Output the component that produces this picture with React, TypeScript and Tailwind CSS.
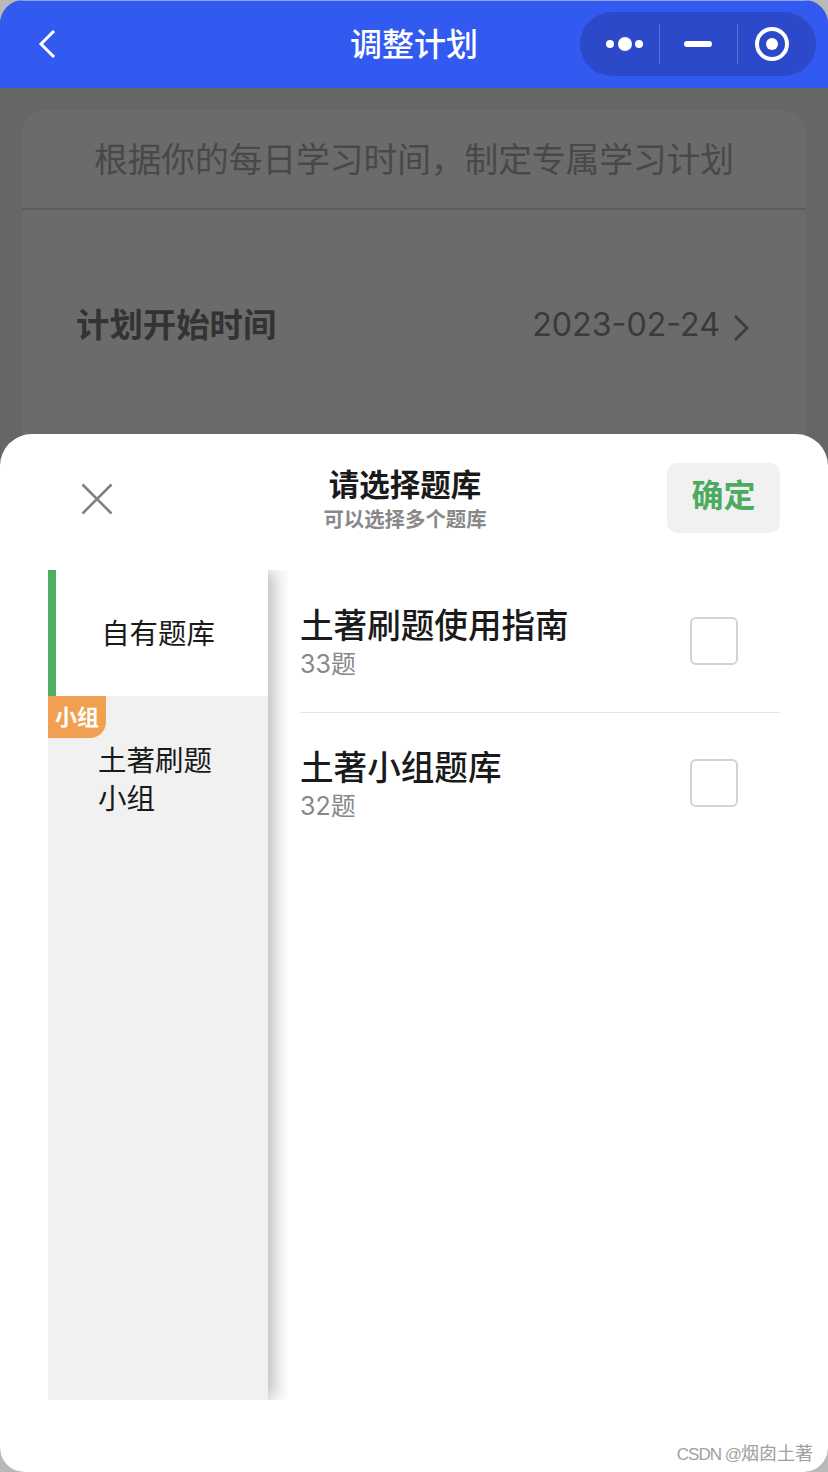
const font = { fontFamily: '"Inter", "Noto Sans CJK SC", sans-serif' };

const banks = [
  { name: "土著刷题使用指南", count: "33题" },
  { name: "土著小组题库", count: "32题" },
];

const CapsuleMenu = () => (
  <div className="mt-[-1px] flex h-[64px] w-[236px] items-center rounded-full bg-[#2b49c8]">
    <div className="flex w-[79px] items-center justify-end gap-[3.5px] pr-[16px]">
      <span className="h-[8px] w-[8px] rounded-full bg-white" />
      <span className="h-[14px] w-[14px] rounded-full bg-white" />
      <span className="h-[8px] w-[8px] rounded-full bg-white" />
    </div>
    <div className="h-[40px] w-[1px] bg-[#5a74d8]" />
    <div className="flex w-[77px] justify-center">
      <span className="mr-[2px] h-[6px] w-[28px] rounded-full bg-white" />
    </div>
    <div className="h-[40px] w-[1px] bg-[#5a74d8]" />
    <div className="flex flex-1 justify-center pr-[11px]">
      <span className="flex h-[34px] w-[34px] items-center justify-center rounded-full border-[4px] border-white">
        <span className="h-[12px] w-[12px] rounded-full bg-white" />
      </span>
    </div>
  </div>
);

export default function App() {
  return (
    <div className="h-[1472px] w-[828px] bg-[#b9b9b9]" style={font}>
      <div className="relative h-full w-full overflow-hidden rounded-[24px] bg-[#666666]">
        {/* nav bar */}
        <div className="relative flex h-[88px] items-center justify-between border-t border-[#8fa5f5] bg-[#335af0] pl-[37px] pr-[12px]">
          <svg width="20" height="30" viewBox="0 0 20 30" fill="none" className="mt-[-1px]">
            <path d="M17 2 L4 15 L17 28" stroke="white" strokeWidth="3" />
          </svg>
          <div className="absolute inset-x-0 text-center text-[32px] font-medium leading-[44px] text-white">调整计划</div>
          <div className="relative">
            <CapsuleMenu />
          </div>
        </div>

        {/* page under the mask */}
        <div className="px-[22px] pt-[22px]">
          <div className="h-[400px] rounded-t-[24px] bg-[#6b6b6b]">
            <div className="flex h-[100px] items-center justify-center border-b-[2px] border-[#5c5c5c] pt-[3px] text-[33.7px] text-[#484848]">
              根据你的每日学习时间，制定专属学习计划
            </div>
            <div className="flex items-center justify-between pl-[54px] pr-[57px] pt-[91px]">
              <span className="text-[33.4px] font-bold leading-[48px] text-[#333333]">计划开始时间</span>
              <span className="flex items-center gap-[13px] text-[32.2px] leading-[48px] text-[#3a3a3a]">
                2023-02-24
                <svg width="16" height="28" viewBox="0 0 16 28" fill="none" className="mt-[5px]">
                  <path d="M2 2 L14 14 L2 26" stroke="#3a3a3a" strokeWidth="2.6" />
                </svg>
              </span>
            </div>
          </div>
        </div>

        {/* bottom sheet */}
        <div className="absolute inset-x-0 bottom-0 top-[434px] rounded-t-[32px] bg-white">
          <div className="relative flex h-[136px] items-start justify-between pl-[81px] pr-[48px] pt-[29px]">
            <svg width="32" height="32" viewBox="0 0 32 32" fill="none" className="mt-[20px]">
              <path d="M1.5 1.5 L30.5 30.5 M30.5 1.5 L1.5 30.5" stroke="#808080" strokeWidth="2.6" />
            </svg>
            <div className="absolute left-0 right-[18px] top-[31px] text-center">
              <div className="text-[30.5px] font-bold leading-[40px] text-[#1a1a1a]">请选择题库</div>
              <div className="text-[20.4px] font-bold leading-[30px] text-[#888888]">可以选择多个题库</div>
            </div>
            <div className="relative flex h-[70px] w-[113px] items-center justify-center rounded-[10px] bg-[#f1f1f1] pb-[4px] text-[32px] font-bold text-[#4cab60]">
              确定
            </div>
          </div>

          <div className="flex h-[830px]">
            {/* left tabs, shadow clipped to the row height */}
            <div className="ml-[48px] h-full w-[240px] overflow-hidden">
              <div className="flex h-full w-[220px] flex-col bg-[#f1f1f1] shadow-[5px_0_18px_rgba(0,0,0,0.3)]">
                <div className="flex h-[126px] items-center justify-center border-l-[8px] border-[#4fae62] bg-white pr-[8px] pt-[3px] text-[28.4px] text-[#1a1a1a]">
                  自有题库
                </div>
                <div className="relative pl-[50px] pt-[46px] text-[28.5px] leading-[38px] text-[#1a1a1a]">
                  <span className="absolute left-0 top-0 flex h-[42px] w-[58px] items-center justify-center rounded-br-[16px] bg-[#f0a050] text-[22px] font-bold leading-none text-white">
                    小组
                  </span>
                  土著刷题
                  <br />
                  小组
                </div>
              </div>
            </div>

            {/* bank list */}
            <div className="ml-[12px] w-[480px]">
              {banks.map((bank, index) => (
                <div
                  key={bank.name}
                  className={`flex items-start justify-between pt-[34px] ${index === 0 ? "mb-[-1px] h-[143px] border-b border-[#e4e4e4]" : "h-[142px]"}`}
                >
                  <div>
                    <div className="text-[33.6px] font-medium leading-[44px] text-[#1a1a1a]">{bank.name}</div>
                    <div className="mt-[1px] text-[25px] leading-[30px] text-[#888888]">{bank.count}</div>
                  </div>
                  <div className="mr-[42px] mt-[13px] h-[48px] w-[48px] rounded-[6px] border-2 border-[#d2d2d2] bg-white" />
                </div>
              ))}
            </div>
          </div>

          {/* watermark */}
          <div
            className="absolute bottom-[5px] right-[15px] text-[18px] leading-[24px] text-[#a0a0a0]"
            style={{ fontFamily: '"Liberation Sans", "Noto Sans CJK SC", sans-serif' }}
          >
            <span className="text-[17px] tracking-[-1px]">CSDN @</span>烟囱土著
          </div>
        </div>
      </div>
    </div>
  );
}
